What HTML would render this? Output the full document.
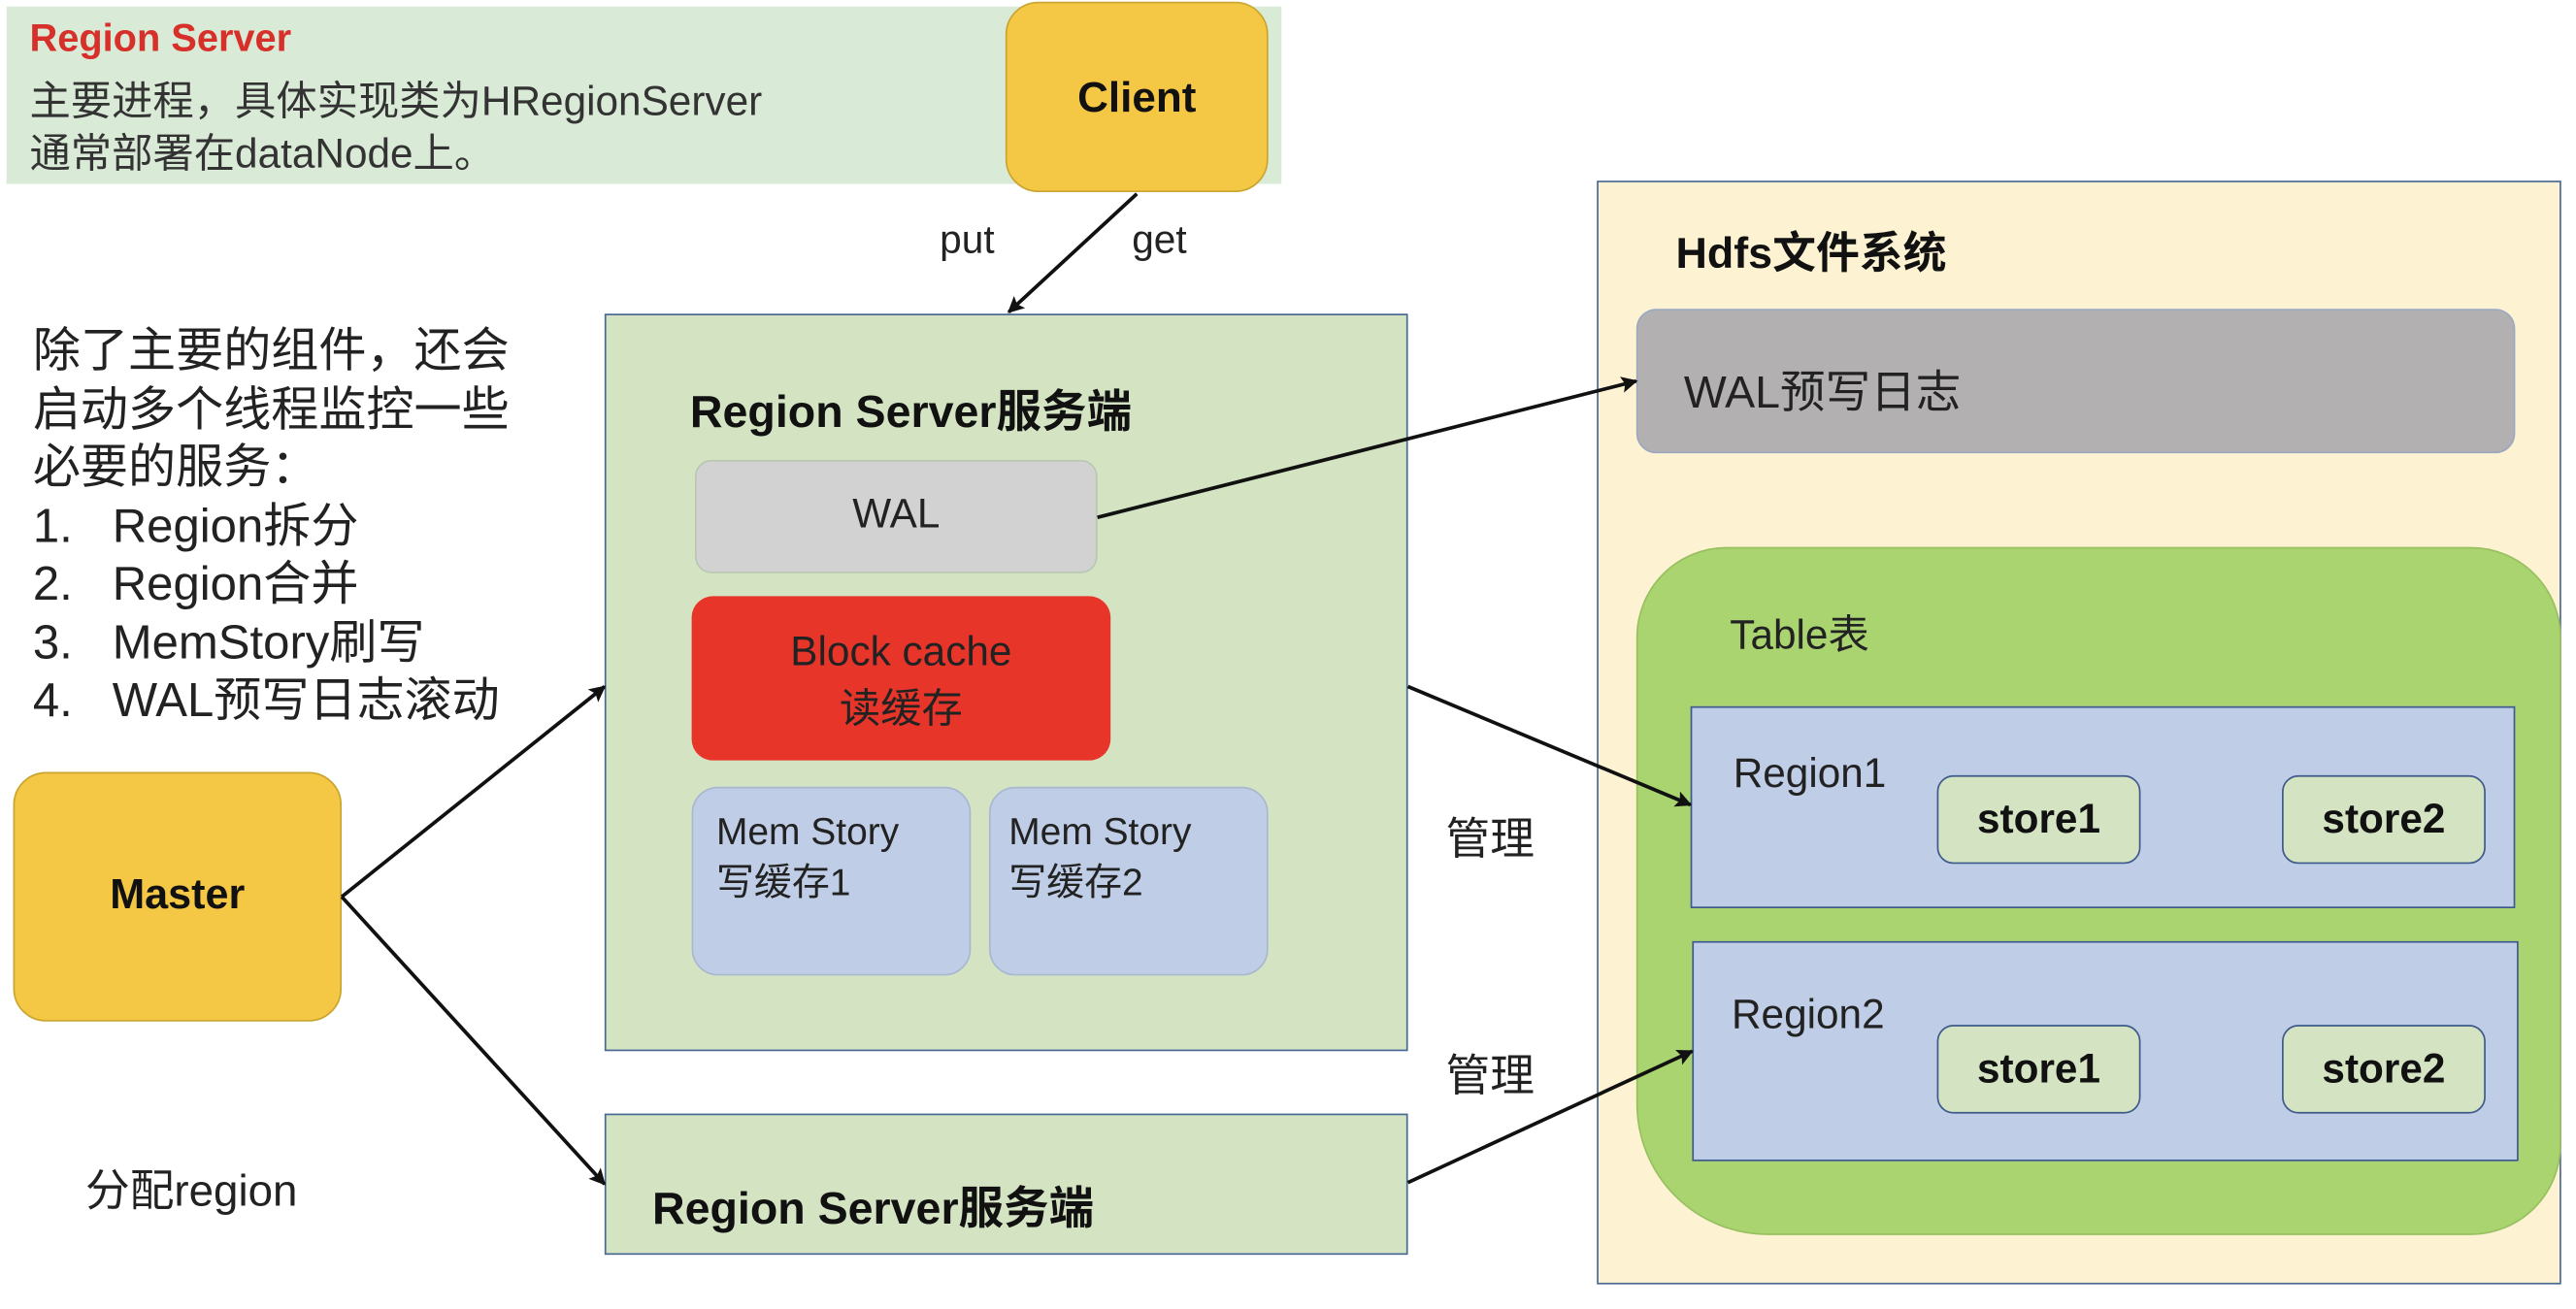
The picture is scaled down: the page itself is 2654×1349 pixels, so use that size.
<!DOCTYPE html>
<html><head><meta charset="utf-8"><style>
html,body{margin:0;padding:0;background:#fff;width:2654px;height:1348px;overflow:hidden}
#w{position:absolute;left:0;top:0;width:1568px;height:797px;transform:scale(1.69260);transform-origin:0 0;font-family:"Liberation Sans","Noto Sans CJK SC",sans-serif;color:#111}
.a{position:absolute;box-sizing:border-box}
.t{position:absolute;white-space:nowrap}
.b{font-weight:bold}
</style></head><body><div id="w">
<div class="a" style="left:4px;top:4px;width:776px;height:108px;background:#d9ead6"></div>
<div class="t b" style="left:18px;top:10px;font-size:23.5px;color:#d7302a">Region Server</div>
<div class="t" style="left:18px;top:42px;font-size:25px;color:#333">主要进程，具体实现类为HRegionServer</div>
<div class="t" style="left:18px;top:74px;font-size:25px;color:#333">通常部署在dataNode上。</div>

<div class="a" style="left:612px;top:1px;width:160px;height:116px;background:#f4c744;border:1.5px solid #c9a530;border-radius:20px"></div>
<div class="t b" style="left:612px;width:160px;text-align:center;top:44px;font-size:26px">Client</div>
<div class="t" style="left:572px;top:133px;font-size:24px;color:#222">put</div>
<div class="t" style="left:689px;top:133px;font-size:24px;color:#222">get</div>

<div class="t" style="left:20px;top:197px;font-size:29px;line-height:35.5px;color:#222">除了主要的组件，还会<br>启动多个线程监控一些<br>必要的服务：<br>1.&nbsp;&nbsp;&nbsp;Region拆分<br>2.&nbsp;&nbsp;&nbsp;Region合并<br>3.&nbsp;&nbsp;&nbsp;MemStory刷写<br>4.&nbsp;&nbsp;&nbsp;WAL预写日志滚动</div>

<div class="a" style="left:8px;top:470px;width:200px;height:152px;background:#f4c744;border:1.5px solid #c9a530;border-radius:20px"></div>
<div class="t b" style="left:8px;width:200px;text-align:center;top:531px;font-size:25.5px">Master</div>
<div class="t" style="left:52px;top:703px;font-size:27px;color:#222">分配region</div>

<div class="a" style="left:368px;top:191px;width:489px;height:449px;background:#d4e4c3;border:1.5px solid #4a6a96"></div>
<div class="t b" style="left:420px;top:228px;font-size:27.5px">Region Server服务端</div>
<div class="a" style="left:423px;top:280px;width:245px;height:69px;background:#d2d2d2;border:1px solid #b9c7b3;border-radius:10px"></div>
<div class="t" style="left:423px;width:245px;text-align:center;top:299px;font-size:25px;color:#222">WAL</div>
<div class="a" style="left:421px;top:363px;width:255px;height:100px;background:#e8352a;border-radius:13px"></div>
<div class="t" style="left:421px;width:255px;text-align:center;top:380px;font-size:25px;line-height:35px;color:#222">Block cache<br>读缓存</div>
<div class="a" style="left:421px;top:479px;width:170px;height:115px;background:#bfcde6;border:1px solid #a9b8cf;border-radius:16px"></div>
<div class="t" style="left:436px;top:491px;font-size:23px;line-height:31px;color:#222">Mem Story<br>写缓存1</div>
<div class="a" style="left:602px;top:479px;width:170px;height:115px;background:#bfcde6;border:1px solid #a9b8cf;border-radius:16px"></div>
<div class="t" style="left:614px;top:491px;font-size:23px;line-height:31px;color:#222">Mem Story<br>写缓存2</div>

<div class="a" style="left:368px;top:678px;width:489px;height:86px;background:#d4e4c3;border:1.5px solid #4a6a96"></div>
<div class="t b" style="left:397px;top:713px;font-size:27.5px">Region Server服务端</div>

<div class="t" style="left:880px;top:489px;font-size:27px;color:#222">管理</div>
<div class="t" style="left:880px;top:633px;font-size:27px;color:#222">管理</div>

<div class="a" style="left:972px;top:110px;width:587px;height:672px;background:#fdf2d2;border:1.5px solid #4a6a96"></div>
<div class="t b" style="left:1020px;top:132px;font-size:26.5px">Hdfs文件系统</div>
<div class="a" style="left:996px;top:188px;width:535px;height:88px;background:#b3b0b1;border:1px solid #9aa9c0;border-radius:12px"></div>
<div class="t" style="left:1025px;top:216px;font-size:27.5px;color:#222">WAL预写日志</div>
<div class="a" style="left:996px;top:333px;width:563px;height:419px;background:#a9d46f;border:1px solid #98c060;border-radius:55px 55px 55px 80px"></div>
<div class="t" style="left:1053px;top:367px;font-size:25px;color:#222">Table表</div>

<div class="a" style="left:1029px;top:430px;width:502px;height:123px;background:#bfcde6;border:1.5px solid #3d5a8a"></div>
<div class="t" style="left:1055px;top:457px;font-size:25px;color:#222">Region1</div>
<div class="a" style="left:1179px;top:472px;width:124px;height:54px;background:#d4e4c3;border:1.5px solid #3d5a8a;border-radius:10px"></div>
<div class="t b" style="left:1179px;width:124px;text-align:center;top:485px;font-size:25px">store1</div>
<div class="a" style="left:1389px;top:472px;width:124px;height:54px;background:#d4e4c3;border:1.5px solid #3d5a8a;border-radius:10px"></div>
<div class="t b" style="left:1389px;width:124px;text-align:center;top:485px;font-size:25px">store2</div>

<div class="a" style="left:1030px;top:573px;width:503px;height:134px;background:#bfcde6;border:1.5px solid #3d5a8a"></div>
<div class="t" style="left:1054px;top:604px;font-size:25px;color:#222">Region2</div>
<div class="a" style="left:1179px;top:624px;width:124px;height:54px;background:#d4e4c3;border:1.5px solid #3d5a8a;border-radius:10px"></div>
<div class="t b" style="left:1179px;width:124px;text-align:center;top:637px;font-size:25px">store1</div>
<div class="a" style="left:1389px;top:624px;width:124px;height:54px;background:#d4e4c3;border:1.5px solid #3d5a8a;border-radius:10px"></div>
<div class="t b" style="left:1389px;width:124px;text-align:center;top:637px;font-size:25px">store2</div>

<svg class="a" style="left:0;top:0" width="1568" height="797">
<defs><marker id="m" markerWidth="10" markerHeight="10" refX="9" refY="5" orient="auto" markerUnits="userSpaceOnUse"><path d="M0,0 L10,5 L0,10 L2,5 z" fill="#111"/></marker></defs>
<g stroke="#111" stroke-width="2.2" fill="none" marker-end="url(#m)">
<line x1="692" y1="118" x2="614" y2="190"/>
<line x1="668" y1="315" x2="996" y2="232"/>
<line x1="857" y1="418" x2="1029" y2="490"/>
<line x1="208" y1="546" x2="368" y2="418"/>
<line x1="208" y1="546" x2="368" y2="721"/>
<line x1="857" y1="720" x2="1030" y2="640"/>
</g></svg>
</div></body></html>
